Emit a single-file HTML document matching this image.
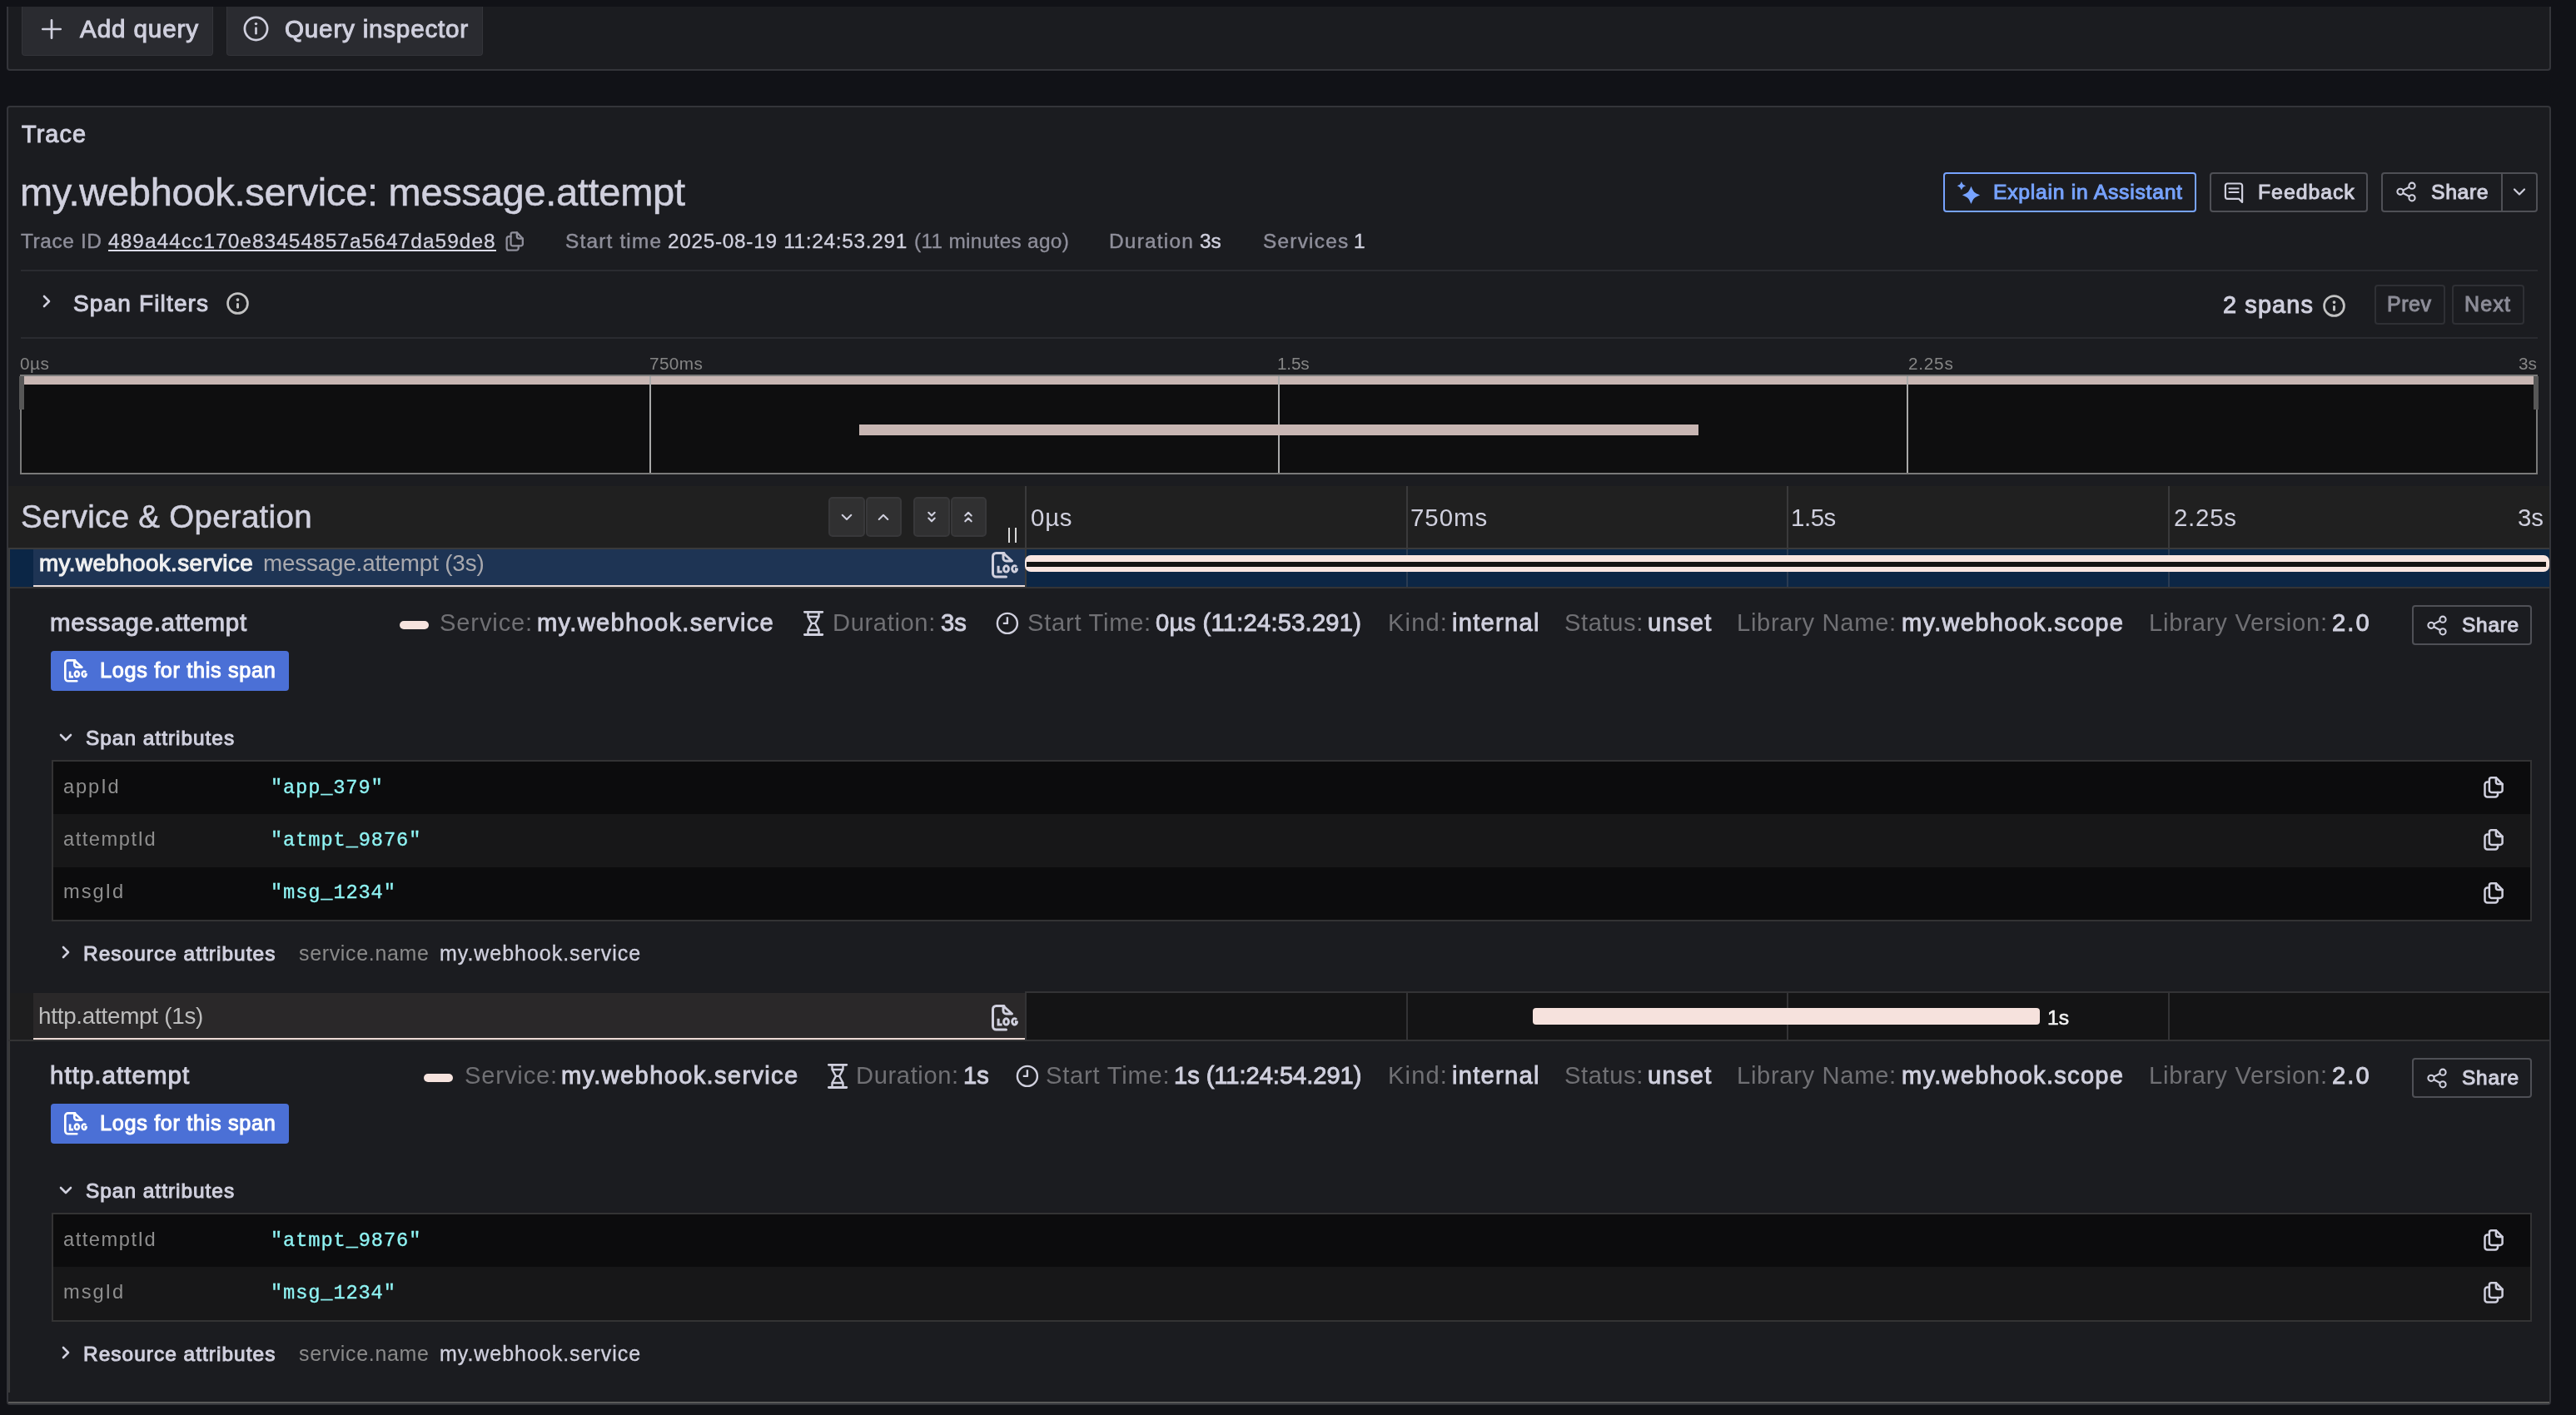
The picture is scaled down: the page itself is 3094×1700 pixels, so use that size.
<!DOCTYPE html><html><head><meta charset="utf-8"><style>
html,body{margin:0;padding:0;background:#111217;width:3094px;height:1700px;overflow:hidden;}
.a{position:absolute;}
svg.a{will-change:transform;overflow:visible;}
.t{position:absolute;white-space:nowrap;will-change:transform;}
body{position:relative;font-family:"Liberation Sans",sans-serif;}
</style></head><body>
<div class="a" style="left:8px;top:8px;width:3056px;height:77px;background:#1b1c20;border:2px solid #34353a;border-top:none;box-sizing:border-box;border-radius:0 0 4px 4px;"></div>
<div class="a" style="left:26px;top:8px;width:230px;height:59px;background:#2a2b30;border:1px solid #34353a;border-top:none;box-sizing:border-box;border-radius:0 0 4px 4px;"></div>
<div class="a" style="left:272px;top:8px;width:308px;height:59px;background:#2a2b30;border:1px solid #34353a;border-top:none;box-sizing:border-box;border-radius:0 0 4px 4px;"></div>
<svg class="a" style="left:50px;top:23px;" width="24" height="24" viewBox="0 0 24 24"><path d="M12 1.3v21.4M1.3 12h21.4" stroke="#d0d0de" stroke-width="2.7" stroke-linecap="round" fill="none"/></svg>
<div class="t" style="top:20px;font-size:29.67px;line-height:29.67px;color:#d0d0de;font-family:'Liberation Sans',sans-serif;font-weight:normal;letter-spacing:0.862px;-webkit-text-stroke:1.0px #d0d0de;left:95.94px;">Add query</div>
<svg class="a" style="left:292px;top:19px;" width="31" height="31" viewBox="0 0 31 31"><circle cx="15.5" cy="15.5" r="13.6" stroke="#d0d0de" stroke-width="2.7" fill="none"/><rect x="14.2" y="13.5" width="2.6" height="9" rx="1.2" fill="#d0d0de"/><circle cx="15.5" cy="9.6" r="1.7" fill="#d0d0de"/></svg>
<div class="t" style="top:20px;font-size:29.67px;line-height:29.67px;color:#d0d0de;font-family:'Liberation Sans',sans-serif;font-weight:normal;letter-spacing:0.774px;-webkit-text-stroke:1.0px #d0d0de;left:342.29px;">Query inspector</div>
<div class="a" style="left:0px;top:0px;width:3094px;height:8px;background:#111217;"></div>
<div class="a" style="left:8px;top:127px;width:3056px;height:1561px;background:#1b1c20;border:2px solid #34353a;box-sizing:border-box;border-radius:4px;"></div>
<div class="t" style="top:147px;font-size:28.84px;line-height:28.84px;color:#d0d0de;font-family:'Liberation Sans',sans-serif;font-weight:normal;letter-spacing:1.089px;-webkit-text-stroke:1.0px #d0d0de;left:26.25px;">Trace</div>
<div class="t" style="top:207px;font-size:47.00px;line-height:47.00px;color:#d0d0de;font-family:'Liberation Sans',sans-serif;font-weight:normal;letter-spacing:-0.292px;-webkit-text-stroke:0.5px #d0d0de;left:23.58px;">my.webhook.service: message.attempt</div>
<div class="t" style="top:278px;font-size:24.41px;line-height:24.41px;color:#8f8f9b;font-family:'Liberation Sans',sans-serif;font-weight:normal;letter-spacing:0.613px;-webkit-text-stroke:0.45px #8f8f9b;left:24.65px;">Trace ID</div>
<div class="t" style="top:278px;font-size:24.41px;line-height:24.41px;color:#d0d0de;font-family:'Liberation Sans',sans-serif;font-weight:normal;letter-spacing:1.066px;-webkit-text-stroke:0.3px #d0d0de;left:130.44px;">489a44cc170e83454857a5647da59de8</div>
<div class="a" style="left:130px;top:300px;width:466px;height:2px;background:#dcdcea;"></div>
<svg class="a" style="left:599.5px;top:271.2px;" width="36" height="36" viewBox="0 0 36 36"><g transform="scale(0.91)" fill="none" stroke="#8f8f9b" stroke-width="2.5" stroke-linejoin="round" stroke-linecap="round"><path d="M22.9 9.2H17.4A2.5 2.5 0 0 0 14.9 11.7V24.4A2.5 2.5 0 0 0 17.4 26.9H28.1A2.5 2.5 0 0 0 30.6 24.4V17L22.9 9.2Z"/><path d="M22.9 9.2V14.3A2.8 2.8 0 0 0 25.7 17.1H30.6"/><path d="M14.9 14.5H12.5A3 3 0 0 0 9.5 17.5V29.6A3 3 0 0 0 12.5 32.6H22A3 3 0 0 0 25 29.6V26.9"/></g></svg>
<div class="t" style="top:278px;font-size:24.41px;line-height:24.41px;color:#8f8f9b;font-family:'Liberation Sans',sans-serif;font-weight:normal;letter-spacing:1.180px;-webkit-text-stroke:0.45px #8f8f9b;left:679.09px;">Start time</div>
<div class="t" style="top:278px;font-size:24.41px;line-height:24.41px;color:#d0d0de;font-family:'Liberation Sans',sans-serif;font-weight:normal;letter-spacing:0.682px;-webkit-text-stroke:0.3px #d0d0de;left:801.97px;">2025-08-19 11:24:53.291</div>
<div class="t" style="top:278px;font-size:24.41px;line-height:24.41px;color:#8f8f9b;font-family:'Liberation Sans',sans-serif;font-weight:normal;letter-spacing:0.301px;-webkit-text-stroke:0.3px #8f8f9b;left:1097.99px;">(11 minutes ago)</div>
<div class="t" style="top:278px;font-size:24.41px;line-height:24.41px;color:#8f8f9b;font-family:'Liberation Sans',sans-serif;font-weight:normal;letter-spacing:1.228px;-webkit-text-stroke:0.45px #8f8f9b;left:1331.90px;">Duration</div>
<div class="t" style="top:278px;font-size:24.41px;line-height:24.41px;color:#d0d0de;font-family:'Liberation Sans',sans-serif;font-weight:normal;-webkit-text-stroke:0.45px #d0d0de;left:1441.07px;">3s</div>
<div class="t" style="top:278px;font-size:24.41px;line-height:24.41px;color:#8f8f9b;font-family:'Liberation Sans',sans-serif;font-weight:normal;letter-spacing:1.235px;-webkit-text-stroke:0.45px #8f8f9b;left:1516.69px;">Services</div>
<div class="t" style="top:278px;font-size:24.41px;line-height:24.41px;color:#d0d0de;font-family:'Liberation Sans',sans-serif;font-weight:normal;-webkit-text-stroke:0.45px #d0d0de;left:1625.64px;">1</div>
<div class="a" style="left:2334px;top:207px;width:304px;height:48px;border:2px solid #77a3ff;box-sizing:border-box;border-radius:4px;"></div>
<svg class="a" style="left:2345px;top:212px;" width="40" height="40" viewBox="0 0 40 40"><path d="M10.9 5.8999999999999995 C12.49 9.61 12.49 9.61 16.2 11.2 C12.49 12.79 12.49 12.79 10.9 16.5 C9.31 12.79 9.31 12.79 5.6000000000000005 11.2 C9.31 9.61 9.31 9.61 10.9 5.8999999999999995Z" fill="#77a3ff"/><path d="M22.5 11.799999999999999 C25.68 19.22 25.68 19.22 33.1 22.4 C25.68 25.58 25.68 25.58 22.5 33.0 C19.32 25.58 19.32 25.58 11.9 22.4 C19.32 19.22 19.32 19.22 22.5 11.799999999999999Z" fill="#77a3ff"/></svg>
<div class="t" style="top:219px;font-size:24.72px;line-height:24.72px;color:#77a3ff;font-family:'Liberation Sans',sans-serif;font-weight:normal;letter-spacing:0.738px;-webkit-text-stroke:1.0px #77a3ff;left:2393.77px;">Explain in Assistant</div>
<div class="a" style="left:2654px;top:207px;width:190px;height:48px;border:2px solid #4f5056;box-sizing:border-box;border-radius:4px;"></div>
<svg class="a" style="left:2670px;top:217px;" width="28" height="28" viewBox="0 0 28 28"><g fill="none" stroke="#d0d0de" stroke-width="2.2" stroke-linejoin="round" stroke-linecap="round"><path d="M5.5 3.5h15a2.6 2.6 0 0 1 2.6 2.6V26L19 21.8H5.5a2.6 2.6 0 0 1-2.6-2.6V6.1a2.6 2.6 0 0 1 2.6-2.6z"/><path d="M7.5 9.5h11M7.5 14h11"/></g></svg>
<div class="t" style="top:219px;font-size:24.72px;line-height:24.72px;color:#d0d0de;font-family:'Liberation Sans',sans-serif;font-weight:normal;letter-spacing:1.018px;-webkit-text-stroke:1.0px #d0d0de;left:2711.97px;">Feedback</div>
<div class="a" style="left:2860px;top:207px;width:188px;height:48px;border:2px solid #4f5056;box-sizing:border-box;border-radius:4px;"></div>
<div class="a" style="left:3004px;top:209px;width:2px;height:44px;background:#4f5056;"></div>
<svg class="a" style="left:2878px;top:218px;" width="24" height="25" viewBox="0 0 24 25"><g fill="none" stroke="#d0d0de" stroke-width="2.1"><circle cx="5" cy="12.3" r="3.6"/><circle cx="19" cy="5.2" r="3.6"/><circle cx="19" cy="19.8" r="3.6"/><path d="M8.2 10.6l7.6-3.8M8.2 14l7.6 4"/></g></svg>
<div class="t" style="top:219px;font-size:24.72px;line-height:24.72px;color:#d0d0de;font-family:'Liberation Sans',sans-serif;font-weight:normal;letter-spacing:0.663px;-webkit-text-stroke:1.0px #d0d0de;left:2919.88px;">Share</div>
<svg class="a" style="left:3018px;top:225px;" width="16" height="12" viewBox="0 0 16 12"><path d="M2 2.5l6 6 6-6" fill="none" stroke="#d0d0de" stroke-width="2.2" stroke-linecap="round" stroke-linejoin="round"/></svg>
<div class="a" style="left:25px;top:324px;width:3023px;height:2px;background:#2a2b30;"></div>
<svg class="a" style="left:47px;top:352px;" width="18" height="20" viewBox="0 0 18 20"><path d="M6 4l6 6-6 6" fill="none" stroke="#d0d0de" stroke-width="2.6" stroke-linecap="round" stroke-linejoin="round"/></svg>
<div class="t" style="top:351px;font-size:28.02px;line-height:28.02px;color:#d0d0de;font-family:'Liberation Sans',sans-serif;font-weight:normal;letter-spacing:1.148px;-webkit-text-stroke:1.0px #d0d0de;left:87.93px;">Span Filters</div>
<svg class="a" style="left:272.4px;top:351.4px;" width="27" height="27" viewBox="0 0 27 27"><circle cx="13.5" cy="13.5" r="11.950000000000001" stroke="#c2c2c2" stroke-width="2.7" fill="none"/><rect x="12.0" y="13.1" width="3" height="6.6" rx="1.4" fill="#c2c2c2"/><circle cx="13.5" cy="9.1" r="1.9" fill="#c2c2c2"/></svg>
<div class="t" style="top:352px;font-size:28.84px;line-height:28.84px;color:#d0d0de;font-family:'Liberation Sans',sans-serif;font-weight:normal;letter-spacing:1.158px;-webkit-text-stroke:1.0px #d0d0de;left:2670.05px;">2 spans</div>
<svg class="a" style="left:2790.4px;top:354.4px;" width="27" height="27" viewBox="0 0 27 27"><circle cx="13.5" cy="13.5" r="11.950000000000001" stroke="#c2c2c2" stroke-width="2.7" fill="none"/><rect x="12.0" y="13.1" width="3" height="6.6" rx="1.4" fill="#c2c2c2"/><circle cx="13.5" cy="9.1" r="1.9" fill="#c2c2c2"/></svg>
<div class="a" style="left:2852px;top:342px;width:85px;height:48px;border:2px solid #2f3035;box-sizing:border-box;border-radius:4px;"></div>
<div class="a" style="left:2945px;top:342px;width:87px;height:48px;border:2px solid #2f3035;box-sizing:border-box;border-radius:4px;"></div>
<div class="t" style="top:353px;font-size:25.00px;line-height:25.00px;color:#8d8d98;font-family:'Liberation Sans',sans-serif;font-weight:normal;letter-spacing:0.554px;-webkit-text-stroke:1.0px #8d8d98;left:2867.45px;">Prev</div>
<div class="t" style="top:353px;font-size:25.00px;line-height:25.00px;color:#8d8d98;font-family:'Liberation Sans',sans-serif;font-weight:normal;letter-spacing:1.220px;-webkit-text-stroke:1.0px #8d8d98;left:2960.25px;">Next</div>
<div class="a" style="left:25px;top:405px;width:3023px;height:2px;background:#2a2b30;"></div>
<div class="t" style="top:427px;font-size:20.76px;line-height:20.76px;color:#858585;font-family:'Liberation Sans',sans-serif;font-weight:normal;letter-spacing:0.443px;left:24.09px;">0µs</div>
<div class="t" style="top:427px;font-size:20.76px;line-height:20.76px;color:#858585;font-family:'Liberation Sans',sans-serif;font-weight:normal;letter-spacing:0.379px;left:779.84px;">750ms</div>
<div class="t" style="top:427px;font-size:20.76px;line-height:20.76px;color:#858585;font-family:'Liberation Sans',sans-serif;font-weight:normal;letter-spacing:-0.201px;left:1534.32px;">1.5s</div>
<div class="t" style="top:427px;font-size:20.76px;line-height:20.76px;color:#858585;font-family:'Liberation Sans',sans-serif;font-weight:normal;letter-spacing:0.753px;left:2291.86px;">2.25s</div>
<div class="t" style="top:427px;font-size:20.76px;line-height:20.76px;color:#858585;font-family:'Liberation Sans',sans-serif;font-weight:normal;right:46.75px;">3s</div>
<div class="a" style="left:24px;top:450px;width:3024px;height:120px;background:#0e0e0f;border:2px solid #7a7a7a;box-sizing:border-box;"></div>
<div class="a" style="left:29px;top:452px;width:3014px;height:10px;background:#c8b6b3;"></div>
<div class="a" style="left:23px;top:452px;width:6px;height:40px;background:#575757;"></div>
<div class="a" style="left:3043px;top:452px;width:6px;height:40px;background:#575757;"></div>
<div class="a" style="left:780px;top:452px;width:2px;height:116px;background:#a9a9a9;"></div>
<div class="a" style="left:1535px;top:452px;width:2px;height:116px;background:#a9a9a9;"></div>
<div class="a" style="left:2290px;top:452px;width:2px;height:116px;background:#a9a9a9;"></div>
<div class="a" style="left:1032px;top:510px;width:1008px;height:13px;background:#c8b6b3;"></div>
<div class="a" style="left:10px;top:584px;width:3052px;height:74px;background:#202020;"></div>
<div class="a" style="left:10px;top:658px;width:3052px;height:2px;background:#3a3a3b;"></div>
<div class="t" style="top:602px;font-size:38.43px;line-height:38.43px;color:#d0d0de;font-family:'Liberation Sans',sans-serif;font-weight:normal;letter-spacing:0.315px;-webkit-text-stroke:0.55px #d0d0de;left:25.45px;">Service &amp; Operation</div>
<div class="a" style="left:995px;top:597px;width:44px;height:48px;background:#303031;border:2px solid #38383a;box-sizing:border-box;border-radius:5px;"></div>
<div class="a" style="left:1040px;top:597px;width:43px;height:48px;background:#303031;border:2px solid #38383a;box-sizing:border-box;border-radius:5px;"></div>
<div class="a" style="left:1097px;top:597px;width:44px;height:48px;background:#303031;border:2px solid #38383a;box-sizing:border-box;border-radius:5px;"></div>
<div class="a" style="left:1142px;top:597px;width:43px;height:48px;background:#303031;border:2px solid #38383a;box-sizing:border-box;border-radius:5px;"></div>
<svg class="a" style="left:1009.2px;top:615.5px;" width="16" height="11" viewBox="0 0 16 11"><path d="M2.7 2.7l5.3 5.3 5.3-5.3" fill="none" stroke="#d0d0de" stroke-width="2" stroke-linecap="round" stroke-linejoin="round"/></svg>
<svg class="a" style="left:1053.2px;top:615.5px;" width="16" height="11" viewBox="0 0 16 11"><path d="M2.7 8l5.3-5.3 5.3 5.3" fill="none" stroke="#d0d0de" stroke-width="2" stroke-linecap="round" stroke-linejoin="round"/></svg>
<svg class="a" style="left:1111px;top:611px;" width="16" height="18" viewBox="0 0 16 18"><path d="M4.3 4.8l3.7 3.7 3.7-3.7M4.3 11.6l3.7 3.7 3.7-3.7" fill="none" stroke="#d0d0de" stroke-width="2.1" stroke-linecap="round" stroke-linejoin="round"/></svg>
<svg class="a" style="left:1155.1px;top:611px;" width="16" height="18" viewBox="0 0 16 18"><path d="M4.3 8.5l3.7-3.7 3.7 3.7M4.3 15.3l3.7-3.7 3.7 3.7" fill="none" stroke="#d0d0de" stroke-width="2.1" stroke-linecap="round" stroke-linejoin="round"/></svg>
<div class="a" style="left:1211px;top:634px;width:2px;height:18px;background:#d8d8d8;"></div>
<div class="a" style="left:1219px;top:634px;width:2px;height:18px;background:#d8d8d8;"></div>
<div class="a" style="left:1231px;top:584px;width:2px;height:74px;background:#3a3a3b;"></div>
<div class="a" style="left:1689px;top:584px;width:2px;height:74px;background:#3a3a3b;"></div>
<div class="a" style="left:2146px;top:584px;width:2px;height:74px;background:#3a3a3b;"></div>
<div class="a" style="left:2604px;top:584px;width:2px;height:74px;background:#3a3a3b;"></div>
<div class="t" style="top:607px;font-size:29.45px;line-height:29.45px;color:#d0d0de;font-family:'Liberation Sans',sans-serif;font-weight:normal;letter-spacing:0.768px;left:1237.65px;">0µs</div>
<div class="t" style="top:607px;font-size:29.45px;line-height:29.45px;color:#d0d0de;font-family:'Liberation Sans',sans-serif;font-weight:normal;letter-spacing:0.971px;left:1694.49px;">750ms</div>
<div class="t" style="top:607px;font-size:29.45px;line-height:29.45px;color:#d0d0de;font-family:'Liberation Sans',sans-serif;font-weight:normal;letter-spacing:-0.455px;left:2150.76px;">1.5s</div>
<div class="t" style="top:607px;font-size:29.45px;line-height:29.45px;color:#d0d0de;font-family:'Liberation Sans',sans-serif;font-weight:normal;letter-spacing:0.750px;left:2610.52px;">2.25s</div>
<div class="t" style="top:607px;font-size:29.45px;line-height:29.45px;color:#d0d0de;font-family:'Liberation Sans',sans-serif;font-weight:normal;right:38.94px;">3s</div>
<div class="a" style="left:12px;top:660px;width:28px;height:45px;background:#0b2646;"></div>
<div class="a" style="left:40px;top:660px;width:1191px;height:43px;background:#1e3454;"></div>
<div class="a" style="left:40px;top:703px;width:1191px;height:2px;background:#e8dad8;"></div>
<div class="a" style="left:1231px;top:660px;width:2px;height:45px;background:#3a3a3b;"></div>
<div class="a" style="left:1233px;top:660px;width:1829px;height:45px;background:#0c2645;"></div>
<div class="a" style="left:1689px;top:660px;width:2px;height:45px;background:#2a3b52;"></div>
<div class="a" style="left:2146px;top:660px;width:2px;height:45px;background:#2a3b52;"></div>
<div class="a" style="left:2604px;top:660px;width:2px;height:45px;background:#2a3b52;"></div>
<div class="a" style="left:10px;top:705px;width:3052px;height:2px;background:#343435;"></div>
<div class="a" style="left:10px;top:660px;width:2px;height:1013px;background:#3a3a3b;"></div>
<div class="t" style="top:663px;font-size:27.80px;line-height:27.80px;color:#f0f0f0;font-family:'Liberation Sans',sans-serif;font-weight:normal;letter-spacing:0.409px;-webkit-text-stroke:1.1px #f0f0f0;left:46.55px;">my.webhook.service</div>
<div class="t" style="top:663px;font-size:27.80px;line-height:27.80px;color:#a9a9ae;font-family:'Liberation Sans',sans-serif;font-weight:normal;letter-spacing:-0.167px;left:316.15px;">message.attempt (3s)</div>
<svg class="a" style="left:1190.9px;top:663px;" width="33" height="32" viewBox="0 0 33 32"><g transform="scale(1.0)" fill="none" stroke="#d0d0de" stroke-width="3" stroke-linejoin="round" stroke-linecap="round"><path d="M15 1.5H5.5A4 4 0 0 0 1.5 5.5V26A4 4 0 0 0 5.5 30H17.5"/><path d="M14 1.5L24.5 11H17.5A3.5 3.5 0 0 1 14 7.5Z"/><path d="M8.1 16.7V24.1H12.6" stroke-linecap="butt" stroke-linejoin="miter"/><ellipse cx="17.55" cy="20.4" rx="2.95" ry="3.7" stroke-width="2.9"/><path d="M29.9 18.0A2.95 3.7 0 1 0 30.55 20.6H28" stroke-width="2.9" stroke-linecap="butt"/></g></svg>
<div class="a" style="left:1231px;top:667px;width:1831px;height:20px;background:#f9e6e1;border-radius:7px;"></div>
<div class="a" style="left:1233px;top:675px;width:1825px;height:6px;background:#141414;"></div>
<div class="t" style="top:733px;font-size:29.50px;line-height:29.50px;color:#d0d0de;font-family:'Liberation Sans',sans-serif;font-weight:normal;letter-spacing:0.704px;-webkit-text-stroke:1.0px #d0d0de;left:60.04px;">message.attempt</div>
<div class="a" style="left:480px;top:746px;width:35px;height:10px;background:#f6e3de;border-radius:5px;"></div>
<div class="t" style="top:734px;font-size:29.17px;line-height:29.17px;color:#707074;font-family:'Liberation Sans',sans-serif;font-weight:normal;letter-spacing:0.843px;left:528.48px;">Service:</div>
<div class="t" style="top:734px;font-size:29.17px;line-height:29.17px;color:#d0d0de;font-family:'Liberation Sans',sans-serif;font-weight:normal;letter-spacing:1.284px;-webkit-text-stroke:0.9px #d0d0de;left:645.36px;">my.webhook.service</div>
<svg class="a" style="left:960.3px;top:728px;" width="35" height="40" viewBox="0 0 35 40"><g fill="none" stroke="#d0d0de" stroke-linecap="round" stroke-linejoin="round"><path d="M6.4 7.35H27.8M6.4 34.55H27.8" stroke-width="2.9"/><path d="M10.5 8.8V13L14.9 20.9L10.5 29V33.1M23.5 8.8V13L19.1 20.9L23.5 29V33.1M10.5 13H23.5M14.9 20.9H19.1M10.5 29H23.5" stroke-width="2.4"/></g></svg>
<div class="t" style="top:734px;font-size:29.17px;line-height:29.17px;color:#707074;font-family:'Liberation Sans',sans-serif;font-weight:normal;letter-spacing:0.625px;left:999.61px;">Duration:</div>
<div class="t" style="top:734px;font-size:29.17px;line-height:29.17px;color:#d0d0de;font-family:'Liberation Sans',sans-serif;font-weight:normal;-webkit-text-stroke:0.9px #d0d0de;left:1129.99px;">3s</div>
<svg class="a" style="left:1195.8px;top:735px;" width="28" height="28" viewBox="0 0 28 28"><circle cx="13.9" cy="13.9" r="12" fill="none" stroke="#d0d0de" stroke-width="2.4"/><path d="M13.9 6.2V13.9H8.8" fill="none" stroke="#d0d0de" stroke-width="2.4" stroke-linejoin="round"/></svg>
<div class="t" style="top:734px;font-size:29.17px;line-height:29.17px;color:#707074;font-family:'Liberation Sans',sans-serif;font-weight:normal;letter-spacing:0.726px;left:1233.58px;">Start Time:</div>
<div class="t" style="top:734px;font-size:29.17px;line-height:29.17px;color:#d0d0de;font-family:'Liberation Sans',sans-serif;font-weight:normal;letter-spacing:0.221px;-webkit-text-stroke:0.9px #d0d0de;left:1388.26px;">0µs (11:24:53.291)</div>
<div class="t" style="top:734px;font-size:29.17px;line-height:29.17px;color:#707074;font-family:'Liberation Sans',sans-serif;font-weight:normal;letter-spacing:1.118px;left:1667.11px;">Kind:</div>
<div class="t" style="top:734px;font-size:29.17px;line-height:29.17px;color:#d0d0de;font-family:'Liberation Sans',sans-serif;font-weight:normal;letter-spacing:1.262px;-webkit-text-stroke:0.9px #d0d0de;left:1743.55px;">internal</div>
<div class="t" style="top:734px;font-size:29.17px;line-height:29.17px;color:#707074;font-family:'Liberation Sans',sans-serif;font-weight:normal;letter-spacing:0.579px;left:1878.88px;">Status:</div>
<div class="t" style="top:734px;font-size:29.17px;line-height:29.17px;color:#d0d0de;font-family:'Liberation Sans',sans-serif;font-weight:normal;letter-spacing:1.262px;-webkit-text-stroke:0.9px #d0d0de;left:1978.81px;">unset</div>
<div class="t" style="top:734px;font-size:29.17px;line-height:29.17px;color:#707074;font-family:'Liberation Sans',sans-serif;font-weight:normal;letter-spacing:0.672px;left:2086.41px;">Library Name:</div>
<div class="t" style="top:734px;font-size:29.17px;line-height:29.17px;color:#d0d0de;font-family:'Liberation Sans',sans-serif;font-weight:normal;letter-spacing:1.240px;-webkit-text-stroke:0.9px #d0d0de;left:2283.96px;">my.webhook.scope</div>
<div class="t" style="top:734px;font-size:29.17px;line-height:29.17px;color:#707074;font-family:'Liberation Sans',sans-serif;font-weight:normal;letter-spacing:0.771px;left:2581.31px;">Library Version:</div>
<div class="t" style="top:734px;font-size:29.17px;line-height:29.17px;color:#d0d0de;font-family:'Liberation Sans',sans-serif;font-weight:normal;letter-spacing:2.080px;-webkit-text-stroke:0.9px #d0d0de;left:2800.93px;">2.0</div>
<div class="a" style="left:2897px;top:727px;width:144px;height:48px;border:2px solid #4f5056;box-sizing:border-box;border-radius:4px;"></div>
<svg class="a" style="left:2915px;top:739px;" width="24" height="25" viewBox="0 0 24 25"><g fill="none" stroke="#d0d0de" stroke-width="2.1"><circle cx="5" cy="12.3" r="3.6"/><circle cx="19" cy="5.2" r="3.6"/><circle cx="19" cy="19.8" r="3.6"/><path d="M8.2 10.6l7.6-3.8M8.2 14l7.6 4"/></g></svg>
<div class="t" style="top:739px;font-size:24.45px;line-height:24.45px;color:#d0d0de;font-family:'Liberation Sans',sans-serif;font-weight:normal;letter-spacing:0.744px;-webkit-text-stroke:1.0px #d0d0de;left:2956.89px;">Share</div>
<div class="a" style="left:61px;top:782px;width:286px;height:48px;background:#4b70d6;border-radius:4px;"></div>
<svg class="a" style="left:76.9px;top:791.9px;" width="29" height="28" viewBox="0 0 29 28"><g transform="scale(0.875)" fill="none" stroke="#ffffff" stroke-width="3" stroke-linejoin="round" stroke-linecap="round"><path d="M15 1.5H5.5A4 4 0 0 0 1.5 5.5V26A4 4 0 0 0 5.5 30H17.5"/><path d="M14 1.5L24.5 11H17.5A3.5 3.5 0 0 1 14 7.5Z"/><path d="M8.1 16.7V24.1H12.6" stroke-linecap="butt" stroke-linejoin="miter"/><ellipse cx="17.55" cy="20.4" rx="2.95" ry="3.7" stroke-width="2.9"/><path d="M29.9 18.0A2.95 3.7 0 1 0 30.55 20.6H28" stroke-width="2.9" stroke-linecap="butt"/></g></svg>
<div class="t" style="top:793px;font-size:25.27px;line-height:25.27px;color:#ffffff;font-family:'Liberation Sans',sans-serif;font-weight:normal;letter-spacing:0.666px;-webkit-text-stroke:1.0px #ffffff;left:120.43px;">Logs for this span</div>
<svg class="a" style="left:70px;top:880px;" width="18" height="13" viewBox="0 0 18 13"><path d="M3 3l6 6 6-6" fill="none" stroke="#d0d0de" stroke-width="2.6" stroke-linecap="round" stroke-linejoin="round"/></svg>
<div class="t" style="top:875px;font-size:24.45px;line-height:24.45px;color:#d0d0de;font-family:'Liberation Sans',sans-serif;font-weight:normal;letter-spacing:0.984px;-webkit-text-stroke:1.0px #d0d0de;left:102.69px;">Span attributes</div>
<div class="a" style="left:62px;top:913px;width:2979px;height:194px;background:#333334;"></div>
<div class="a" style="left:64px;top:915px;width:2975px;height:63px;background:#0c0c0d;"></div>
<div class="t" style="top:934px;font-size:23.70px;line-height:23.70px;color:#8e8e8e;font-family:'Liberation Sans',sans-serif;font-weight:normal;letter-spacing:1.877px;left:76.39px;">appId</div>
<div class="t" style="top:935px;font-size:23.70px;line-height:23.70px;color:#8ff3f3;font-family:'Liberation Mono',monospace;font-weight:normal;letter-spacing:0.846px;-webkit-text-stroke:0.35px #8ff3f3;left:324.79px;">"app_379"</div>
<svg class="a" style="left:2975px;top:925px;" width="40" height="40" viewBox="0 0 40 40"><g transform="scale(1.0)" fill="none" stroke="#d0d0de" stroke-width="2.5" stroke-linejoin="round" stroke-linecap="round"><path d="M22.9 9.2H17.4A2.5 2.5 0 0 0 14.9 11.7V24.4A2.5 2.5 0 0 0 17.4 26.9H28.1A2.5 2.5 0 0 0 30.6 24.4V17L22.9 9.2Z"/><path d="M22.9 9.2V14.3A2.8 2.8 0 0 0 25.7 17.1H30.6"/><path d="M14.9 14.5H12.5A3 3 0 0 0 9.5 17.5V29.6A3 3 0 0 0 12.5 32.6H22A3 3 0 0 0 25 29.6V26.9"/></g></svg>
<div class="a" style="left:64px;top:978px;width:2975px;height:64px;background:#171718;"></div>
<div class="t" style="top:997px;font-size:23.70px;line-height:23.70px;color:#8e8e8e;font-family:'Liberation Sans',sans-serif;font-weight:normal;letter-spacing:1.503px;left:76.39px;">attemptId</div>
<div class="t" style="top:998px;font-size:23.70px;line-height:23.70px;color:#8ff3f3;font-family:'Liberation Mono',monospace;font-weight:normal;letter-spacing:0.892px;-webkit-text-stroke:0.35px #8ff3f3;left:324.79px;">"atmpt_9876"</div>
<svg class="a" style="left:2975px;top:988px;" width="40" height="40" viewBox="0 0 40 40"><g transform="scale(1.0)" fill="none" stroke="#d0d0de" stroke-width="2.5" stroke-linejoin="round" stroke-linecap="round"><path d="M22.9 9.2H17.4A2.5 2.5 0 0 0 14.9 11.7V24.4A2.5 2.5 0 0 0 17.4 26.9H28.1A2.5 2.5 0 0 0 30.6 24.4V17L22.9 9.2Z"/><path d="M22.9 9.2V14.3A2.8 2.8 0 0 0 25.7 17.1H30.6"/><path d="M14.9 14.5H12.5A3 3 0 0 0 9.5 17.5V29.6A3 3 0 0 0 12.5 32.6H22A3 3 0 0 0 25 29.6V26.9"/></g></svg>
<div class="a" style="left:64px;top:1042px;width:2975px;height:63px;background:#0c0c0d;"></div>
<div class="t" style="top:1060px;font-size:23.70px;line-height:23.70px;color:#8e8e8e;font-family:'Liberation Sans',sans-serif;font-weight:normal;letter-spacing:1.910px;left:75.83px;">msgId</div>
<div class="t" style="top:1061px;font-size:23.70px;line-height:23.70px;color:#8ff3f3;font-family:'Liberation Mono',monospace;font-weight:normal;letter-spacing:0.861px;-webkit-text-stroke:0.35px #8ff3f3;left:324.79px;">"msg_1234"</div>
<svg class="a" style="left:2975px;top:1052px;" width="40" height="40" viewBox="0 0 40 40"><g transform="scale(1.0)" fill="none" stroke="#d0d0de" stroke-width="2.5" stroke-linejoin="round" stroke-linecap="round"><path d="M22.9 9.2H17.4A2.5 2.5 0 0 0 14.9 11.7V24.4A2.5 2.5 0 0 0 17.4 26.9H28.1A2.5 2.5 0 0 0 30.6 24.4V17L22.9 9.2Z"/><path d="M22.9 9.2V14.3A2.8 2.8 0 0 0 25.7 17.1H30.6"/><path d="M14.9 14.5H12.5A3 3 0 0 0 9.5 17.5V29.6A3 3 0 0 0 12.5 32.6H22A3 3 0 0 0 25 29.6V26.9"/></g></svg>
<svg class="a" style="left:72px;top:1135.3px;" width="14" height="18" viewBox="0 0 14 18"><path d="M4 3l6 6-6 6" fill="none" stroke="#d0d0de" stroke-width="2.6" stroke-linecap="round" stroke-linejoin="round"/></svg>
<div class="t" style="top:1134px;font-size:24.45px;line-height:24.45px;color:#d0d0de;font-family:'Liberation Sans',sans-serif;font-weight:normal;letter-spacing:1.025px;-webkit-text-stroke:1.0px #d0d0de;left:100.49px;">Resource attributes</div>
<div class="t" style="top:1133px;font-size:24.97px;line-height:24.97px;color:#8a8a8a;font-family:'Liberation Sans',sans-serif;font-weight:normal;letter-spacing:0.673px;left:359.31px;">service.name</div>
<div class="t" style="top:1133px;font-size:24.97px;line-height:24.97px;color:#d0d0de;font-family:'Liberation Sans',sans-serif;font-weight:normal;letter-spacing:0.985px;-webkit-text-stroke:0.3px #d0d0de;left:527.84px;">my.webhook.service</div>
<div class="a" style="left:12px;top:1193px;width:28px;height:56px;background:#1d1d1e;"></div>
<div class="a" style="left:40px;top:1193px;width:1191px;height:54px;background:#2a2829;"></div>
<div class="a" style="left:40px;top:1247px;width:1191px;height:2px;background:#ecd9d4;"></div>
<div class="a" style="left:1231px;top:1191px;width:1831px;height:2px;background:#333335;"></div>
<div class="a" style="left:1231px;top:1193px;width:2px;height:56px;background:#333335;"></div>
<div class="a" style="left:1233px;top:1193px;width:1829px;height:56px;background:#141415;"></div>
<div class="a" style="left:1689px;top:1193px;width:2px;height:56px;background:#333335;"></div>
<div class="a" style="left:2146px;top:1193px;width:2px;height:56px;background:#333335;"></div>
<div class="a" style="left:2604px;top:1193px;width:2px;height:56px;background:#333335;"></div>
<div class="a" style="left:10px;top:1249px;width:3052px;height:2px;background:#333335;"></div>
<div class="t" style="top:1207px;font-size:27.80px;line-height:27.80px;color:#bdbdbd;font-family:'Liberation Sans',sans-serif;font-weight:normal;letter-spacing:-0.254px;left:46.47px;">http.attempt (1s)</div>
<svg class="a" style="left:1190.9px;top:1206.7px;" width="33" height="32" viewBox="0 0 33 32"><g transform="scale(1.0)" fill="none" stroke="#d0d0de" stroke-width="3" stroke-linejoin="round" stroke-linecap="round"><path d="M15 1.5H5.5A4 4 0 0 0 1.5 5.5V26A4 4 0 0 0 5.5 30H17.5"/><path d="M14 1.5L24.5 11H17.5A3.5 3.5 0 0 1 14 7.5Z"/><path d="M8.1 16.7V24.1H12.6" stroke-linecap="butt" stroke-linejoin="miter"/><ellipse cx="17.55" cy="20.4" rx="2.95" ry="3.7" stroke-width="2.9"/><path d="M29.9 18.0A2.95 3.7 0 1 0 30.55 20.6H28" stroke-width="2.9" stroke-linecap="butt"/></g></svg>
<div class="a" style="left:1841px;top:1211px;width:609px;height:20px;background:#f6e2dd;border-radius:4px;"></div>
<div class="t" style="top:1211px;font-size:24.69px;line-height:24.69px;color:#f2f2f2;font-family:'Liberation Sans',sans-serif;font-weight:normal;-webkit-text-stroke:0.6px #f2f2f2;left:2458.72px;">1s</div>
<div class="t" style="top:1277px;font-size:29.50px;line-height:29.50px;color:#d0d0de;font-family:'Liberation Sans',sans-serif;font-weight:normal;letter-spacing:1.039px;-webkit-text-stroke:1.0px #d0d0de;left:59.95px;">http.attempt</div>
<div class="a" style="left:509px;top:1290px;width:35px;height:10px;background:#f6e3de;border-radius:5px;"></div>
<div class="t" style="top:1278px;font-size:29.17px;line-height:29.17px;color:#707074;font-family:'Liberation Sans',sans-serif;font-weight:normal;letter-spacing:0.843px;left:557.78px;">Service:</div>
<div class="t" style="top:1278px;font-size:29.17px;line-height:29.17px;color:#d0d0de;font-family:'Liberation Sans',sans-serif;font-weight:normal;letter-spacing:1.307px;-webkit-text-stroke:0.9px #d0d0de;left:674.26px;">my.webhook.service</div>
<svg class="a" style="left:989.2px;top:1272px;" width="35" height="40" viewBox="0 0 35 40"><g fill="none" stroke="#d0d0de" stroke-linecap="round" stroke-linejoin="round"><path d="M6.4 7.35H27.8M6.4 34.55H27.8" stroke-width="2.9"/><path d="M10.5 8.8V13L14.9 20.9L10.5 29V33.1M23.5 8.8V13L19.1 20.9L23.5 29V33.1M10.5 13H23.5M14.9 20.9H19.1M10.5 29H23.5" stroke-width="2.4"/></g></svg>
<div class="t" style="top:1278px;font-size:29.17px;line-height:29.17px;color:#707074;font-family:'Liberation Sans',sans-serif;font-weight:normal;letter-spacing:0.612px;left:1028.31px;">Duration:</div>
<div class="t" style="top:1278px;font-size:29.17px;line-height:29.17px;color:#d0d0de;font-family:'Liberation Sans',sans-serif;font-weight:normal;-webkit-text-stroke:0.9px #d0d0de;left:1157.28px;">1s</div>
<svg class="a" style="left:1219.7px;top:1279px;" width="28" height="28" viewBox="0 0 28 28"><circle cx="13.9" cy="13.9" r="12" fill="none" stroke="#d0d0de" stroke-width="2.4"/><path d="M13.9 6.2V13.9H8.8" fill="none" stroke="#d0d0de" stroke-width="2.4" stroke-linejoin="round"/></svg>
<div class="t" style="top:1278px;font-size:29.17px;line-height:29.17px;color:#707074;font-family:'Liberation Sans',sans-serif;font-weight:normal;letter-spacing:0.766px;left:1256.38px;">Start Time:</div>
<div class="t" style="top:1278px;font-size:29.17px;line-height:29.17px;color:#d0d0de;font-family:'Liberation Sans',sans-serif;font-weight:normal;letter-spacing:-0.060px;-webkit-text-stroke:0.9px #d0d0de;left:1409.78px;">1s (11:24:54.291)</div>
<div class="t" style="top:1278px;font-size:29.17px;line-height:29.17px;color:#707074;font-family:'Liberation Sans',sans-serif;font-weight:normal;letter-spacing:1.118px;left:1667.11px;">Kind:</div>
<div class="t" style="top:1278px;font-size:29.17px;line-height:29.17px;color:#d0d0de;font-family:'Liberation Sans',sans-serif;font-weight:normal;letter-spacing:1.262px;-webkit-text-stroke:0.9px #d0d0de;left:1743.55px;">internal</div>
<div class="t" style="top:1278px;font-size:29.17px;line-height:29.17px;color:#707074;font-family:'Liberation Sans',sans-serif;font-weight:normal;letter-spacing:0.579px;left:1878.88px;">Status:</div>
<div class="t" style="top:1278px;font-size:29.17px;line-height:29.17px;color:#d0d0de;font-family:'Liberation Sans',sans-serif;font-weight:normal;letter-spacing:1.262px;-webkit-text-stroke:0.9px #d0d0de;left:1978.81px;">unset</div>
<div class="t" style="top:1278px;font-size:29.17px;line-height:29.17px;color:#707074;font-family:'Liberation Sans',sans-serif;font-weight:normal;letter-spacing:0.672px;left:2086.41px;">Library Name:</div>
<div class="t" style="top:1278px;font-size:29.17px;line-height:29.17px;color:#d0d0de;font-family:'Liberation Sans',sans-serif;font-weight:normal;letter-spacing:1.240px;-webkit-text-stroke:0.9px #d0d0de;left:2283.96px;">my.webhook.scope</div>
<div class="t" style="top:1278px;font-size:29.17px;line-height:29.17px;color:#707074;font-family:'Liberation Sans',sans-serif;font-weight:normal;letter-spacing:0.771px;left:2581.31px;">Library Version:</div>
<div class="t" style="top:1278px;font-size:29.17px;line-height:29.17px;color:#d0d0de;font-family:'Liberation Sans',sans-serif;font-weight:normal;letter-spacing:2.080px;-webkit-text-stroke:0.9px #d0d0de;left:2800.93px;">2.0</div>
<div class="a" style="left:2897px;top:1271px;width:144px;height:48px;border:2px solid #4f5056;box-sizing:border-box;border-radius:4px;"></div>
<svg class="a" style="left:2915px;top:1283px;" width="24" height="25" viewBox="0 0 24 25"><g fill="none" stroke="#d0d0de" stroke-width="2.1"><circle cx="5" cy="12.3" r="3.6"/><circle cx="19" cy="5.2" r="3.6"/><circle cx="19" cy="19.8" r="3.6"/><path d="M8.2 10.6l7.6-3.8M8.2 14l7.6 4"/></g></svg>
<div class="t" style="top:1283px;font-size:24.45px;line-height:24.45px;color:#d0d0de;font-family:'Liberation Sans',sans-serif;font-weight:normal;letter-spacing:0.744px;-webkit-text-stroke:1.0px #d0d0de;left:2956.89px;">Share</div>
<div class="a" style="left:61px;top:1326px;width:286px;height:48px;background:#4b70d6;border-radius:4px;"></div>
<svg class="a" style="left:76.9px;top:1335.9px;" width="29" height="28" viewBox="0 0 29 28"><g transform="scale(0.875)" fill="none" stroke="#ffffff" stroke-width="3" stroke-linejoin="round" stroke-linecap="round"><path d="M15 1.5H5.5A4 4 0 0 0 1.5 5.5V26A4 4 0 0 0 5.5 30H17.5"/><path d="M14 1.5L24.5 11H17.5A3.5 3.5 0 0 1 14 7.5Z"/><path d="M8.1 16.7V24.1H12.6" stroke-linecap="butt" stroke-linejoin="miter"/><ellipse cx="17.55" cy="20.4" rx="2.95" ry="3.7" stroke-width="2.9"/><path d="M29.9 18.0A2.95 3.7 0 1 0 30.55 20.6H28" stroke-width="2.9" stroke-linecap="butt"/></g></svg>
<div class="t" style="top:1337px;font-size:25.27px;line-height:25.27px;color:#ffffff;font-family:'Liberation Sans',sans-serif;font-weight:normal;letter-spacing:0.666px;-webkit-text-stroke:1.0px #ffffff;left:120.43px;">Logs for this span</div>
<svg class="a" style="left:70px;top:1424px;" width="18" height="13" viewBox="0 0 18 13"><path d="M3 3l6 6 6-6" fill="none" stroke="#d0d0de" stroke-width="2.6" stroke-linecap="round" stroke-linejoin="round"/></svg>
<div class="t" style="top:1419px;font-size:24.45px;line-height:24.45px;color:#d0d0de;font-family:'Liberation Sans',sans-serif;font-weight:normal;letter-spacing:0.984px;-webkit-text-stroke:1.0px #d0d0de;left:102.69px;">Span attributes</div>
<div class="a" style="left:62px;top:1457px;width:2979px;height:131px;background:#333334;"></div>
<div class="a" style="left:64px;top:1459px;width:2975px;height:63px;background:#0c0c0d;"></div>
<div class="t" style="top:1478px;font-size:23.70px;line-height:23.70px;color:#8e8e8e;font-family:'Liberation Sans',sans-serif;font-weight:normal;letter-spacing:1.503px;left:76.39px;">attemptId</div>
<div class="t" style="top:1479px;font-size:23.70px;line-height:23.70px;color:#8ff3f3;font-family:'Liberation Mono',monospace;font-weight:normal;letter-spacing:0.892px;-webkit-text-stroke:0.35px #8ff3f3;left:324.79px;">"atmpt_9876"</div>
<svg class="a" style="left:2975px;top:1469px;" width="40" height="40" viewBox="0 0 40 40"><g transform="scale(1.0)" fill="none" stroke="#d0d0de" stroke-width="2.5" stroke-linejoin="round" stroke-linecap="round"><path d="M22.9 9.2H17.4A2.5 2.5 0 0 0 14.9 11.7V24.4A2.5 2.5 0 0 0 17.4 26.9H28.1A2.5 2.5 0 0 0 30.6 24.4V17L22.9 9.2Z"/><path d="M22.9 9.2V14.3A2.8 2.8 0 0 0 25.7 17.1H30.6"/><path d="M14.9 14.5H12.5A3 3 0 0 0 9.5 17.5V29.6A3 3 0 0 0 12.5 32.6H22A3 3 0 0 0 25 29.6V26.9"/></g></svg>
<div class="a" style="left:64px;top:1522px;width:2975px;height:64px;background:#171718;"></div>
<div class="t" style="top:1541px;font-size:23.70px;line-height:23.70px;color:#8e8e8e;font-family:'Liberation Sans',sans-serif;font-weight:normal;letter-spacing:1.910px;left:75.83px;">msgId</div>
<div class="t" style="top:1542px;font-size:23.70px;line-height:23.70px;color:#8ff3f3;font-family:'Liberation Mono',monospace;font-weight:normal;letter-spacing:0.861px;-webkit-text-stroke:0.35px #8ff3f3;left:324.79px;">"msg_1234"</div>
<svg class="a" style="left:2975px;top:1532px;" width="40" height="40" viewBox="0 0 40 40"><g transform="scale(1.0)" fill="none" stroke="#d0d0de" stroke-width="2.5" stroke-linejoin="round" stroke-linecap="round"><path d="M22.9 9.2H17.4A2.5 2.5 0 0 0 14.9 11.7V24.4A2.5 2.5 0 0 0 17.4 26.9H28.1A2.5 2.5 0 0 0 30.6 24.4V17L22.9 9.2Z"/><path d="M22.9 9.2V14.3A2.8 2.8 0 0 0 25.7 17.1H30.6"/><path d="M14.9 14.5H12.5A3 3 0 0 0 9.5 17.5V29.6A3 3 0 0 0 12.5 32.6H22A3 3 0 0 0 25 29.6V26.9"/></g></svg>
<svg class="a" style="left:72px;top:1615.7px;" width="14" height="18" viewBox="0 0 14 18"><path d="M4 3l6 6-6 6" fill="none" stroke="#d0d0de" stroke-width="2.6" stroke-linecap="round" stroke-linejoin="round"/></svg>
<div class="t" style="top:1615px;font-size:24.45px;line-height:24.45px;color:#d0d0de;font-family:'Liberation Sans',sans-serif;font-weight:normal;letter-spacing:1.025px;-webkit-text-stroke:1.0px #d0d0de;left:100.49px;">Resource attributes</div>
<div class="t" style="top:1614px;font-size:24.97px;line-height:24.97px;color:#8a8a8a;font-family:'Liberation Sans',sans-serif;font-weight:normal;letter-spacing:0.673px;left:359.31px;">service.name</div>
<div class="t" style="top:1614px;font-size:24.97px;line-height:24.97px;color:#d0d0de;font-family:'Liberation Sans',sans-serif;font-weight:normal;letter-spacing:0.985px;-webkit-text-stroke:0.3px #d0d0de;left:527.84px;">my.webhook.service</div>
<div class="a" style="left:10px;top:1684px;width:3052px;height:2px;background:#5a5a5a;"></div>
</body></html>
